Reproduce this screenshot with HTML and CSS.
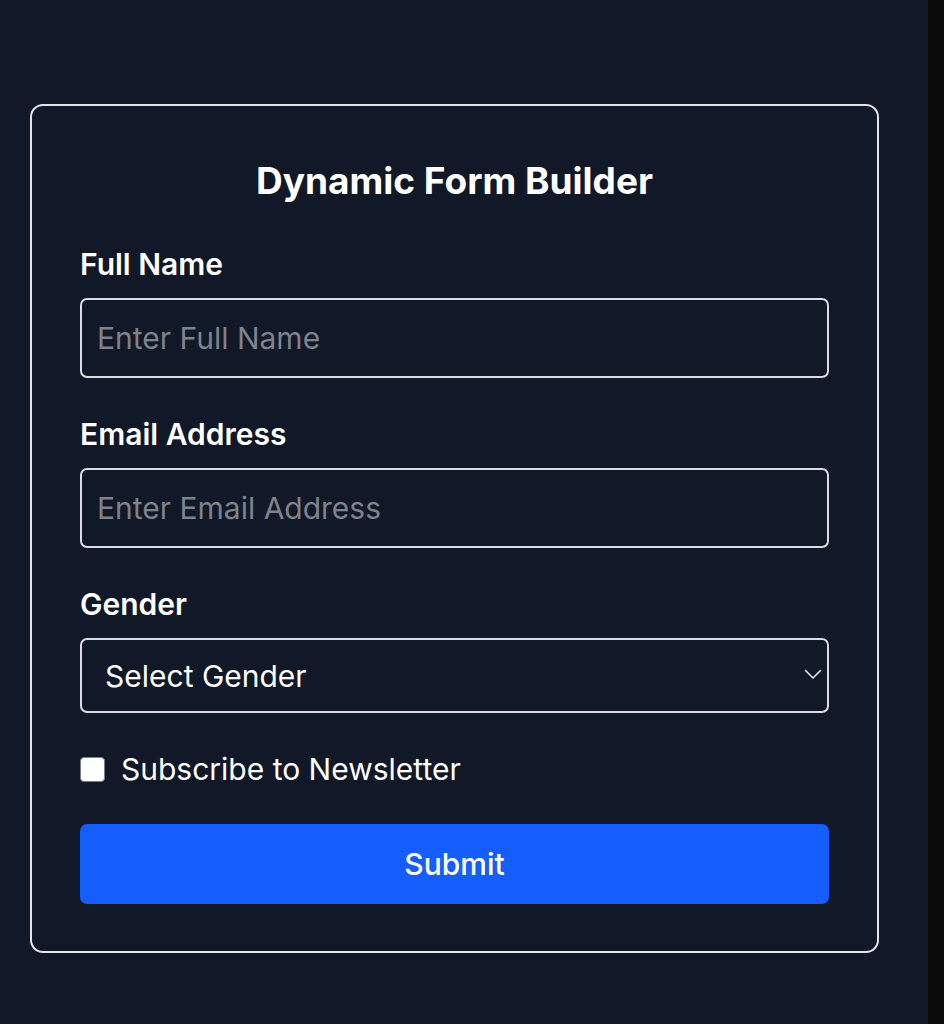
FILE: index.html
```html
<!DOCTYPE html>
<html lang="en">
<head>
<meta charset="utf-8">
<title>Dynamic Form Builder</title>
<link rel="stylesheet" href="styles.css">
</head>
<body>
<div class="page">
  <main class="main">
    <form class="card">
      <h1 class="title">Dynamic Form Builder</h1>
      <div class="field">
        <label class="label" for="fullname">Full Name</label>
        <input class="input" id="fullname" type="text" placeholder="Enter Full Name">
      </div>
      <div class="field">
        <label class="label" for="email">Email Address</label>
        <input class="input" id="email" type="email" placeholder="Enter Email Address">
      </div>
      <div class="field">
        <label class="label" for="gender">Gender</label>
        <div class="select-wrap">
          <select class="select" id="gender">
            <option>Select Gender</option>
            <option>Male</option>
            <option>Female</option>
          </select>
          <svg class="chevron" width="18" height="11" viewBox="0 0 18 11" aria-hidden="true"><path d="M1.5 1.5 L9 9 L16.5 1.5" fill="none" stroke="#e5e7eb" stroke-width="1.6" stroke-linecap="round" stroke-linejoin="round"/></svg>
        </div>
      </div>
      <div class="check-row">
        <input class="checkbox" id="newsletter" type="checkbox">
        <label class="check-label" for="newsletter">Subscribe to Newsletter</label>
      </div>
      <button class="submit" type="button">Submit</button>
    </form>
  </main>
  <div class="rail"></div>
</div>
</body>
</html>
```
FILE: styles.css
```css
* { box-sizing: border-box; }
html, body { margin: 0; padding: 0; }
body {
  background: #111827;
  font-family: Inter, "Noto Sans", "Liberation Sans", sans-serif;
  color: #ffffff;
}
.page {
  display: flex;
  min-height: 1024px;
}
.main {
  flex: 1;
  padding: 104px 0 0 30px;
}
.rail {
  width: 16px;
  background: #0b0b0c;
}
.card {
  width: 849px;
  border: 2px solid #e2e4e8;
  border-radius: 13px;
  padding: 48px 48px 47px 48px;
}
.title {
  margin: 0 0 37px;
  text-align: center;
  font-size: 37px;
  line-height: 53px;
  font-weight: 700;
}
.field {
  margin-bottom: 36px;
}
.label {
  display: block;
  font-size: 30px;
  line-height: 40px;
  font-weight: 600;
  margin-bottom: 14px;
}
.input, .select {
  display: block;
  width: 100%;
  background: #111827;
  border: 2px solid #d9dce1;
  border-radius: 7px;
  color: #ffffff;
  font-family: inherit;
  font-size: 30px;
  outline: none;
}
.input {
  height: 80px;
  padding: 0 15px;
}
.input::placeholder { color: #7d828c; }
.select-wrap {
  position: relative;
}
.select {
  height: 75px;
  padding: 0 23px;
  appearance: none;
  -webkit-appearance: none;
}
.chevron {
  position: absolute;
  right: 7px;
  top: 31px;
}
.check-row {
  display: flex;
  align-items: center;
  gap: 16px;
  height: 40px;
  margin-bottom: 35px;
}
.checkbox {
  appearance: none;
  -webkit-appearance: none;
  margin: 0;
  width: 25px;
  height: 25px;
  background: #ffffff;
  border: 1.5px solid #7a7f87;
  border-radius: 4px;
}
.check-label {
  font-size: 30px;
  line-height: 40px;
}
.submit {
  display: block;
  width: 100%;
  height: 80px;
  border: 0;
  border-radius: 7px;
  background: #155dfc;
  color: #ffffff;
  font-family: inherit;
  font-size: 30px;
  font-weight: 500;
}
```
